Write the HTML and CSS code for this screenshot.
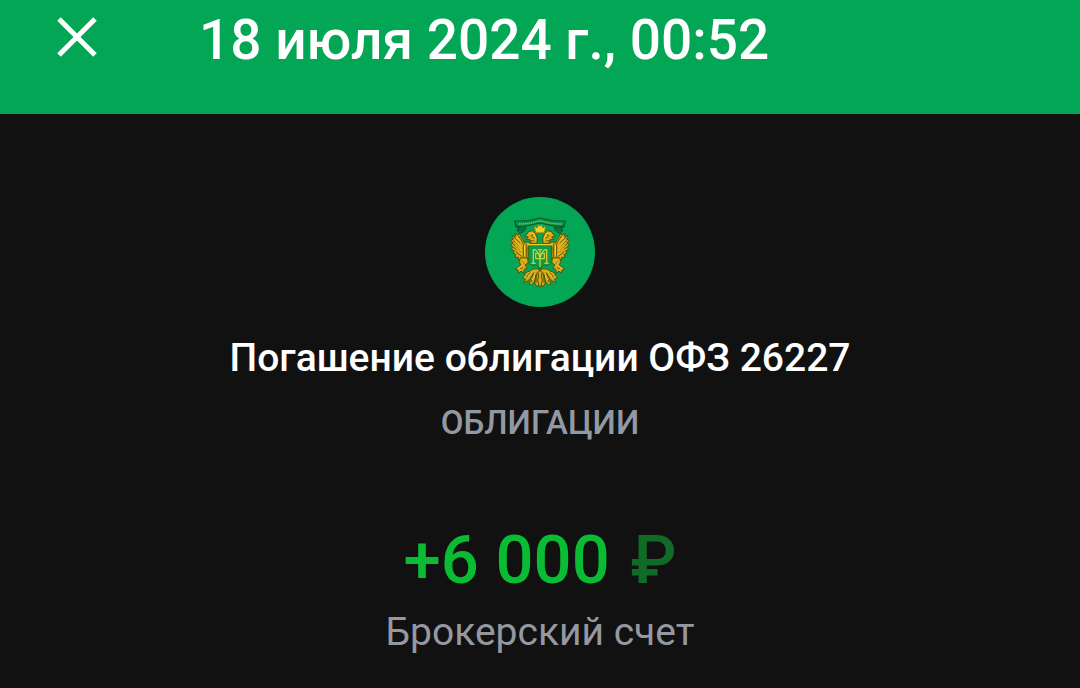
FILE: index.html
```html
<!DOCTYPE html>
<html lang="ru">

<head>
    <meta charset="UTF-8">
    <meta name="viewport" content="width=device-width, initial-scale=1.0">
    <title>Погашение облигации</title>
    <link rel="stylesheet" href="styles.css">
</head>

<body>
    <header class="topbar">
        <button type="button" class="close-btn" aria-label="Закрыть">
            <svg class="close-icon" viewBox="0 0 40 40">
                <path d="M2 2 L38 38 M38 2 L2 38" />
            </svg>
        </button>
        <h1 class="topbar-title">18 июля 2024 г., 00:52</h1>
    </header>

    <main class="operation">
        <svg class="logo" viewBox="15 21 330 330" aria-hidden="true">
            <defs>
                <!-- left half of the eagle, mirrored below -->
                <g id="half">
                    <g class="ribbon">
                        <path d="M105 94 L116 99 L112 109 L124 114 L138 110 L134 122 L122 130 L111 121 L117 114 L108 111 Z" />
                        <path d="M114 118 Q126 124 132 114" />
                    </g>
                    <g class="gold">
                        <path d="M180 163 L150 160 Q139 151 135 160 L128 149 L117 129 L114 136 L105 130 L106 140 L96 137 L100 148 L92 151 L99 159 L92 165 L100 171 L94 178 L103 182 L99 190 L108 193 L105 202 L115 202 L115 211 L123 207 L128 213 L145 202 L144 171 L180 169 Z" />
                        <path d="M171 160 L172 144 L166 130 L157 122 L145 125 L141 133 L133 138 L145 141 L138 149 L149 148 L151 160 Z" />
                        <path d="M121 203 L118 215 L122 225 L114 230 L106 238 L115 241 L115 250 L124 243 L130 251 L133 238 L142 234 L135 225 L145 219 L143 204 Z" />
                        <path d="M178 238 Q160 233 150 243 Q136 244 134 256 L127 263 L136 267 L133 278 L144 272 Q155 265 160 250 Q150 266 147 281 L155 284 L161 278 Q168 266 169 252 Q164 270 165 284 L173 289 L178 280 Z" />
                    </g>
                    <path class="shade" d="M101 141 L121 158 M99 152 L120 168 M99 162 L120 178 M102 173 L122 188 M107 184 L124 199 M116 138 L130 161 L130 203 M139 162 V203 M157 132 L155 139 L164 145 M149 153 L161 152 M126 213 L133 219 M118 236 L129 233 M152 248 Q144 252 140 262 M171 247 Q170 262 171 278 M162 247 Q158 265 153 277" />
                    <path class="light" d="M108 142 L124 157 M105 154 L124 171 M106 165 L124 181 M109 177 L126 194 M134 166 V199 M149 130 L161 131 L167 146 M126 219 L134 209 M115 237 L127 228 M164 250 L157 270 M157 246 L143 260 M175 250 V278" />
                </g>
            </defs>
            <circle class="logo-bg" cx="180" cy="186" r="165" />
            <use href="#half" />
            <use href="#half" transform="translate(360 0) scale(-1 1)" />
            <path class="banner" d="M103 93 Q142 96 180 84 Q218 96 257 93 L251 110 Q215 109 180 99 Q145 109 111 110 Z" />
            <path class="banner-text" d="M117 102 Q150 102 180 92 Q210 102 244 102" />
            <path class="crown" d="M163 109 L172 114 L175 104 L180 109 L185 104 L188 114 L197 109 L193 129 L167 129 Z" />
            <path class="crown-line" d="M168 127 H192" />
            <path class="shield" d="M145 166 H215 V218 Q214 224 203 226 L189 227 L180 237 L171 227 L157 226 Q146 224 145 218 Z" />
            <path class="shield-top" d="M143 164 H217" />
            <path class="monogram" d="M160 220 V179 H164 Q176 184 180 208 Q184 184 196 179 H200 V220 M154 220 H167 M193 220 H206 M180 179 V230 M173 179 H187 M176 190 H167 V206 H193 V190 H184" />
            <path class="tail" d="M180 240 L186 248 L184 259 L187 271 L182 291 H178 L173 271 L176 259 L174 248 Z" />
        </svg>

        <h2 class="operation-name">Погашение облигации ОФЗ 26227</h2>
        <p class="operation-type">ОБЛИГАЦИИ</p>
        <p class="amount">+6 000 <span class="currency">₽</span></p>
        <p class="account">Брокерский счет</p>
    </main>
</body>

</html>
```
FILE: styles.css
```css
* {
    box-sizing: border-box;
}

body {
    font-family: Roboto, "Noto Sans", sans-serif;
    margin: 0;
    background-color: #111111;
    color: white;
}

h1,
h2,
p {
    margin: 0;
    font-weight: 500;
}

.topbar {
    display: flex;
    align-items: flex-start;
    gap: 93px;
    padding: 8px 48px 42px;
    background-color: #03a654;
}

.close-btn {
    display: flex;
    padding: 9px;
    background: none;
    border: none;
    cursor: pointer;
}

.close-icon {
    width: 40px;
    height: 40px;
    fill: none;
    stroke: white;
    stroke-width: 5;
}

.topbar-title {
    font-size: 55px;
    line-height: 64px;
}

.operation {
    display: flex;
    flex-direction: column;
    align-items: center;
    padding: 83px 24px 24px;
    text-align: center;
}

.logo {
    width: 110px;
    height: 110px;
}

.operation-name {
    margin-top: 27px;
    font-size: 39px;
    line-height: 48px;
}

.operation-type {
    margin-top: 21px;
    font-size: 33px;
    line-height: 40px;
    color: #9299a2;
}

.amount {
    margin-top: 77px;
    font-size: 67px;
    line-height: 80px;
    color: #0abb34;
}

.currency {
    margin-left: 4px;
    color: #0f6b26;
}

.account {
    margin-top: 8px;
    font-size: 39px;
    line-height: 48px;
    font-weight: 400;
    color: #9598a0;
}

/* emblem */
.logo-bg {
    fill: #03a654;
}

.ribbon path {
    fill: #078348;
    stroke: #07542f;
    stroke-width: 3;
}

.gold path,
.tail {
    fill: #d9ab1a;
    stroke: #4f5611;
    stroke-width: 3;
    stroke-linejoin: round;
}

.shade {
    fill: none;
    stroke: #625412;
    stroke-width: 3;
}

.light {
    fill: none;
    stroke: #f3d322;
    stroke-width: 3;
}

.banner {
    fill: #07924b;
    stroke: #07542f;
    stroke-width: 3;
}

.banner-text {
    fill: none;
    stroke: #8fc04a;
    stroke-width: 4;
    stroke-dasharray: 4 2;
}

.crown {
    fill: #f3d51f;
    stroke: #8a7a12;
    stroke-width: 2;
}

.crown-line {
    stroke: #c08a14;
    stroke-width: 3;
}

.shield {
    fill: #0b9b4b;
    stroke: #3c6a18;
    stroke-width: 3;
}

.shield-top {
    stroke: #e8cf2a;
    stroke-width: 4;
}

.monogram {
    fill: none;
    stroke: #c6cf35;
    stroke-width: 4;
}
```
